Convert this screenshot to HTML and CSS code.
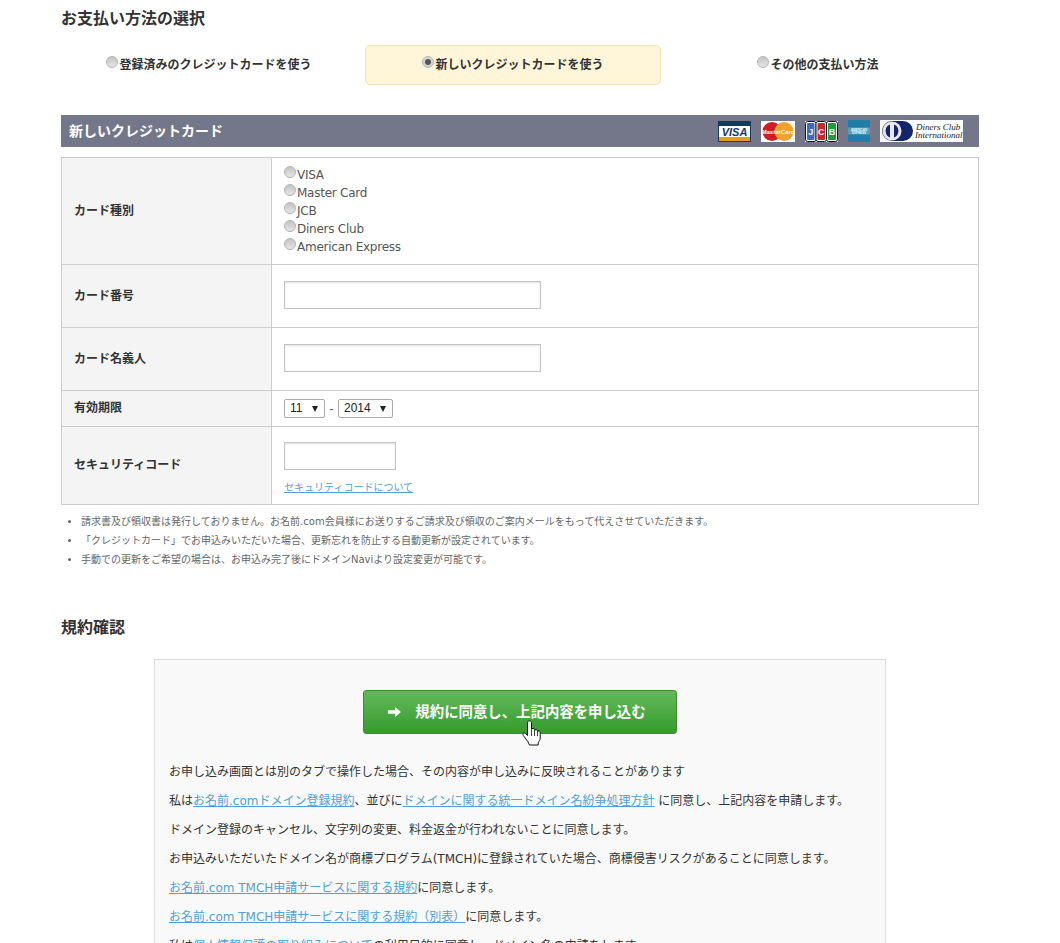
FILE: index.html
```html
<!DOCTYPE html>
<html lang="ja">
<head>
<meta charset="utf-8">
<title>お支払い方法の選択</title>
<link rel="stylesheet" href="styles.css">
</head>
<body>
<main class="page">
  <h2 class="heading">お支払い方法の選択</h2>
  <ul class="tabs">
    <li class="tab"><label class="tab-label"><input class="radio" type="radio" name="pay">登録済みのクレジットカードを使う</label></li>
    <li class="tab tab-active"><label class="tab-label"><input class="radio" type="radio" name="pay" checked>新しいクレジットカードを使う</label></li>
    <li class="tab"><label class="tab-label"><input class="radio" type="radio" name="pay">その他の支払い方法</label></li>
  </ul>

  <div class="bar">
    <h3 class="bar-title">新しいクレジットカード</h3>
    <div class="cards">
      <svg width="33" height="21" viewBox="0 0 33 21"><rect width="33" height="21" fill="#fff"/><rect x=".5" y=".5" width="32" height="20" fill="#fff" stroke="#123a6b"/><rect x="1" y="1" width="31" height="4" fill="#14386e"/><rect x="1" y="16" width="31" height="4" fill="#e39d25"/><text class="visa-text" x="16.5" y="15" text-anchor="middle">VISA</text></svg>
      <svg width="34" height="21" viewBox="0 0 34 21"><rect width="34" height="21" fill="#fff"/><circle cx="11" cy="10.500" r="9.500" fill="#cf1f25"/><circle cx="23" cy="10.500" r="9.500" fill="#f1a22d"/><text class="mc-text" x="17" y="13" text-anchor="middle">MasterCard</text></svg>
      <svg width="33" height="21" viewBox="0 0 33 21"><rect width="33" height="21" fill="#fff"/><rect x=".5" y=".5" width="10.500" height="20" rx="2" fill="#fff" stroke="#111"/><rect x="11" y=".5" width="10.500" height="20" rx="2" fill="#fff" stroke="#111"/><rect x="21.500" y=".5" width="11" height="20" rx="2" fill="#fff" stroke="#111"/><rect x="2" y="2" width="7.500" height="17" rx="1" fill="#3b6cc4"/><rect x="12.500" y="2" width="7.500" height="17" rx="1" fill="#d8202a"/><rect x="23" y="2" width="8" height="17" rx="1" fill="#1f9b3f"/><text class="jcb-text" x="5.700" y="14" text-anchor="middle">J</text><text class="jcb-text" x="16.200" y="14" text-anchor="middle">C</text><text class="jcb-text" x="27" y="14" text-anchor="middle">B</text></svg>
      <svg width="22" height="22" viewBox="0 0 22 22"><rect width="22" height="22" fill="#1f7fa8"/><rect y="7.500" width="22" height="7" fill="#5c9dba"/><text class="amex-text" x="11" y="10.500" text-anchor="middle">AMERICAN</text><text class="amex-text" x="11" y="14" text-anchor="middle">EXPRESS</text></svg>
      <svg width="83" height="22" viewBox="0 0 83 22"><rect width="83" height="22" fill="#fff"/><path d="M12 1h11a10 10 0 0 1 0 20H12a10 10 0 0 1 0-20z" fill="#12246b"/><circle cx="12" cy="11" r="9.500" fill="#e8e8e8"/><path d="M10 4.500v13a7 7 0 0 1 0-13zM14 4.500a7 7 0 0 1 0 13z" fill="#12246b"/><text class="dc-text" x="36" y="10">Diners Club</text><text class="dc-text" x="35" y="18">International</text></svg>
    </div>
  </div>

  <table class="form">
    <tr class="row-type">
      <th>カード種別</th>
      <td>
        <label class="opt"><input class="radio" type="radio" name="card">VISA</label>
        <label class="opt"><input class="radio" type="radio" name="card">Master Card</label>
        <label class="opt"><input class="radio" type="radio" name="card">JCB</label>
        <label class="opt"><input class="radio" type="radio" name="card">Diners Club</label>
        <label class="opt"><input class="radio" type="radio" name="card">American Express</label>
      </td>
    </tr>
    <tr class="row-input">
      <th>カード番号</th>
      <td><input class="field" type="text"></td>
    </tr>
    <tr class="row-input">
      <th>カード名義人</th>
      <td><input class="field" type="text"></td>
    </tr>
    <tr class="row-date">
      <th>有効期限</th>
      <td>
        <div class="date">
          <span class="sel sel-month"><select><option>11</option></select></span>
          <span class="dash">-</span>
          <span class="sel sel-year"><select><option>2014</option></select></span>
        </div>
      </td>
    </tr>
    <tr class="row-code">
      <th>セキュリティコード</th>
      <td>
        <input class="field field-short" type="text">
        <a class="code-link" href="#">セキュリティコードについて</a>
      </td>
    </tr>
  </table>

  <ul class="notes">
    <li>請求書及び領収書は発行しておりません。お名前.com会員様にお送りするご請求及び領収のご案内メールをもって代えさせていただきます。</li>
    <li>「クレジットカード」でお申込みいただいた場合、更新忘れを防止する自動更新が設定されています。</li>
    <li>手動での更新をご希望の場合は、お申込み完了後にドメインNaviより設定変更が可能です。</li>
  </ul>

  <h2 class="heading heading-terms">規約確認</h2>
  <section class="terms">
    <div class="submit-wrap">
      <button class="submit" type="button">
        <svg class="submit-arrow" width="13" height="10" viewBox="0 0 13 10"><path d="M0 3.200h7V0l6 5-6 5V6.800H0z" fill="#fff"/></svg>
        <span class="submit-text">規約に同意し、上記内容を申し込む</span>
      </button>
      <svg class="hand" width="19" height="26" viewBox="0 0 19 26"><path d="M5.500 2.500c0-2.300 4-2.300 4 0v7c.2-1.500 3-1.500 3 .2v1c.2-1.500 3-1.500 3 .2v1c.2-1.400 2.700-1.300 2.700.6v5.500c0 2-1.200 3.300-2 4.800v2.200H7.500l-1.500-3.200L1.300 15.500c-1.200-1.700.6-3.300 2.200-2l2 2z" fill="#fff" stroke="#111" stroke-width="1" stroke-linejoin="round"/><path d="M9.500 10v6M12.500 11v5M15.500 12v4" stroke="#111" stroke-width=".8"/></svg>
    </div>
    <p>お申し込み画面とは別のタブで操作した場合、その内容が申し込みに反映されることがあります</p>
    <p>私は<a href="#">お名前.comドメイン登録規約</a>、並びに<a href="#">ドメインに関する統一ドメイン名紛争処理方針</a> に同意し、上記内容を申請します。</p>
    <p>ドメイン登録のキャンセル、文字列の変更、料金返金が行われないことに同意します。</p>
    <p>お申込みいただいたドメイン名が商標プログラム(TMCH)に登録されていた場合、商標侵害リスクがあることに同意します。</p>
    <p><a href="#">お名前.com TMCH申請サービスに関する規約</a>に同意します。</p>
    <p><a href="#">お名前.com TMCH申請サービスに関する規約（別表）</a>に同意します。</p>
    <p>私は<a href="#">個人情報保護の取り組みについて</a>の利用目的に同意し、ドメイン名の申請をします。</p>
  </section>
</main>
</body>
</html>
```
FILE: styles.css
```css
* { box-sizing: border-box; }
html, body { margin: 0; padding: 0; height: 943px; overflow: hidden; background: #fff; }
body {
  font-family: "DejaVu Sans", "Noto Sans CJK JP", sans-serif;
  font-size: 12px;
  color: #333;
}
a { color: #4f9fdc; text-decoration: underline; }
.page { width: 918px; margin-left: 61px; padding-top: 6px; }
.heading { margin: 0; font-size: 16px; line-height: 24px; font-weight: 700; color: #333; padding-top: 1px; height: 24px; }

.tabs { display: flex; gap: 8px; list-style: none; margin: 15px 0 30px; padding: 0; }
.tab {
  width: 296px; height: 40px; display: flex; align-items: center; justify-content: center;
  font-weight: 700; border: 1px solid transparent; border-radius: 5px; color: #333;
  padding-bottom: 4px;
}
.tab:last-child { margin-left: 1px; }
.tab-active { background: #fff5d9; border-color: #f0e2bd; }
.tab-label { display: flex; align-items: flex-start; }
.radio {
  appearance: none; -webkit-appearance: none; display: block; flex: none; width: 12px; height: 12px;
  margin: 1px 1px 0 0;
  border-radius: 50%; border: 1px solid #b5b5b5;
  background: linear-gradient(#c4c4c4, #e6e6e6);
}
.radio:checked { background: radial-gradient(circle, #555 0 2.5px, #cfcfcf 3.5px, #e6e6e6 100%); }

.bar {
  height: 32px; background: #747789; display: flex; align-items: center;
  justify-content: space-between; padding: 0 16px 0 8px;
}
.bar-title { margin: 0 0 3px; font-size: 14px; font-weight: 700; color: #fff; }
.cards { display: flex; align-items: center; gap: 10px; }
.cards svg { display: block; }
.visa-text { font: italic 700 11px "Liberation Sans", sans-serif; fill: #14386e; }
.mc-text { font: italic 700 6px "Liberation Sans", sans-serif; fill: #fff; }
.jcb-text { font: 700 9px "Liberation Sans", sans-serif; fill: #fff; }
.amex-text { font: 700 3px "Liberation Sans", sans-serif; fill: #dff; }
.dc-text { font: italic 9px "Liberation Serif", serif; fill: #222; }

.form { width: 918px; margin-top: 10px; border-collapse: collapse; table-layout: fixed; }
.form th, .form td { border: 1px solid #ccc; vertical-align: middle; text-align: left; padding: 0 12px; }
.form th { width: 210px; background: #f4f4f4; font-weight: 700; font-size: 12px; color: #333; padding-bottom: 4px; }
.form td { color: #555; }
.row-type { height: 107px; }
.row-input { height: 63px; }
.row-input td { padding-bottom: 2px; }
.row-date { height: 36px; }
.row-code { height: 78px; }
.row-code td { padding-top: 6px; }
.opt { display: flex; align-items: flex-start; height: 18px; line-height: 19px; letter-spacing: -.25px; }
.opt .radio { margin-top: 0; }
.field {
  display: block; width: 257px; height: 28px; margin: 0; padding: 0 4px;
  border: 1px solid #c4c4c4; background: #fff; box-shadow: inset 0 1px 2px rgba(0,0,0,.12);
  border-radius: 0;
}
.field-short { width: 112px; }
.code-link { display: block; margin-top: 11px; font-size: 10px; line-height: 14px; }
.date { display: flex; align-items: center; gap: 4px; font-family: "Liberation Sans", sans-serif; }
.dash { width: 5px; text-align: center; color: #555; }
.sel { position: relative; display: block; height: 19px; }
.sel select {
  appearance: none; -webkit-appearance: none; display: block; width: 100%; height: 19px; margin: 0;
  padding: 0 0 0 5px; border: 1px solid #aaa; border-radius: 2px; background: #fff;
  font: 12px/17px "Liberation Sans", sans-serif; color: #222;
}
.sel::after {
  content: ""; position: absolute; right: 7px; top: 7px;
  border-left: 3.500px solid transparent; border-right: 3.500px solid transparent; border-top: 6px solid #222;
}
.sel-month { width: 41px; }
.sel-year { width: 55px; }

.notes { margin: 7px 0 0; padding: 0 0 0 20px; font-size: 10px; line-height: 19px; color: #666; }
.heading-terms { margin-top: 46px; }

.terms {
  width: 732px; margin: 20px 0 0 93px; padding: 30px 15px 0;
  background: #f9f9f9; border: 1px solid #ddd; height: 400px;
}
.terms p { margin: 0 0 0 -1px; line-height: 29px; color: #333; }
.submit-wrap { position: relative; display: flex; justify-content: center; margin-bottom: 24px; }
.submit {
  width: 314px; height: 44px; display: flex; align-items: center; justify-content: center; gap: 14px;
  padding: 0 6px 0 0; border: 1px solid #3b8e2d; border-radius: 3px;
  background: linear-gradient(#62ba5a, #379a2e);
  font-family: inherit; font-size: 14.400px; font-weight: 700; color: #fff;
}
.submit-text { margin-bottom: 4px; }
.submit-arrow { display: block; }
.hand { position: absolute; left: 352px; top: 30px; }
```
